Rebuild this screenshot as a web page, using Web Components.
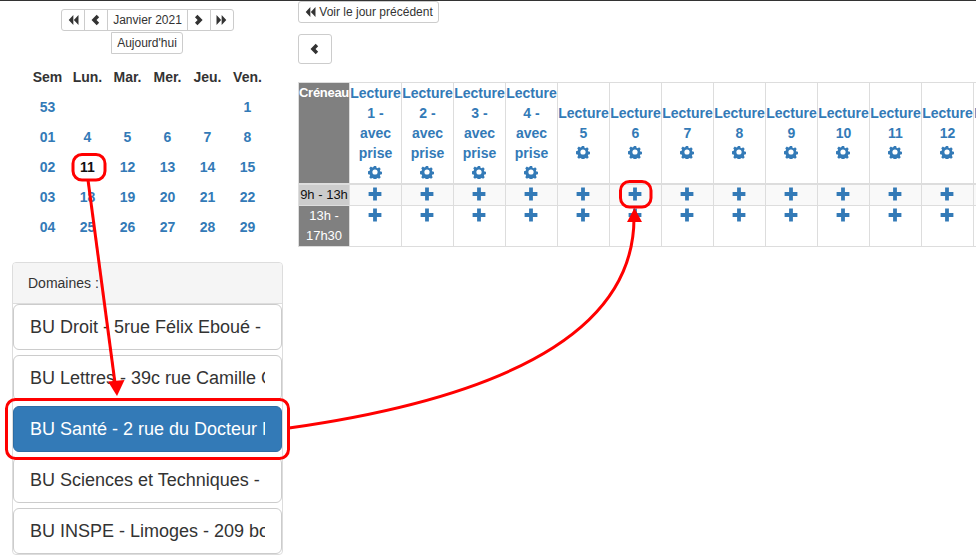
<!DOCTYPE html>
<html lang="fr">
<head>
<meta charset="utf-8">
<title>Réservation</title>
<style>
  html, body { margin: 0; height: 556px; overflow: hidden; background: #fff; }
  body { font: 14px/20px "Liberation Sans", Arial, sans-serif; color: #333; }
</style>
</head>
<body>
<resa-page></resa-page>
<script>
// Inline glyphs standing in for the glyphicons font
const ICONS = {
  backward: '<path d="M7.4 1.2v11.6L2 7zM13.4 1.2v11.6L8 7z"/>',
  forward: '<path d="M.6 1.2v11.6L6 7zM6.6 1.2v11.6L12 7z"/>',
  left: '<path d="M7.8 1l2.9 2.9L7.6 7l3.1 3.1L7.8 13l-6-6z"/>',
  right: '<path d="M5.2 1L2.3 3.9 5.4 7l-3.1 3.1L5.2 13l6-6z"/>',
  plus: '<path d="M5.1.6h3.8v4.5h4.5v3.8H8.9v4.5H5.1V8.9H.6V5.1h4.5z"/>',
  cog: '<path fill-rule="evenodd" d="M5.7.4h2.6l.4 1.8 1.3.55 1.6-1 1.8 1.8-1 1.6.55 1.3 1.8.4v2.6l-1.8.4-.55 1.3 1 1.6-1.8 1.8-1.6-1-1.3.55-.4 1.8H5.7l-.4-1.8-1.3-.55-1.6 1-1.8-1.8 1-1.6-.55-1.3-1.8-.4V6.1l1.8-.4.55-1.3-1-1.6 1.8-1.8 1.6 1 1.3-.55zM7 4.1A2.9 2.9 0 1 0 7 9.9 2.9 2.9 0 1 0 7 4.1z" transform="translate(.7 .7) scale(.9)"/>'
};

class UiIcon extends HTMLElement {
  constructor() {
    super();
    const shadowRoot = this.attachShadow({ mode: "open" });
    const name = this.getAttribute("name");
    shadowRoot.innerHTML = `
      <style>
        :host { display: inline-block; width: 14px; height: 14px; vertical-align: -2px; }
        svg { display: block; width: 100%; height: 100%; fill: currentColor; }
      </style>
      <svg viewBox="0 0 14 14" aria-hidden="true">${ICONS[name]}</svg>`;
  }
}

// Bootstrap 3 like button, size comes from the "size" attribute
class BsButton extends HTMLElement {
  constructor() {
    super();
    const shadowRoot = this.attachShadow({ mode: "open" });
    shadowRoot.innerHTML = `
      <style>
        :host {
          display: inline-block; box-sizing: border-box; white-space: nowrap;
          background: #fff; border: 1px solid #ccc; color: #333; text-align: center;
          font-size: 12px; line-height: 18px; padding: 1px 5px; border-radius: 3px;
        }
        :host([size="sm"]) { padding: 5px 10px; }
        :host([size="lg"]) {
          display: block; text-align: left; font-size: 18px; line-height: 24px;
          padding: 10px 16px; border-radius: 6px;
        }
        :host([active]) { background: #337ab7; border-color: #2e6da4; color: #fff; }
        .clip { display: block; }
        :host([size="lg"]) .clip { overflow: hidden; }
        ::slotted(ui-icon) { width: 12px; height: 12px; vertical-align: -2px; }
      </style>
      <span class="clip"><slot></slot></span>`;
  }
}

class MonthNav extends HTMLElement {
  constructor() {
    super();
    const shadowRoot = this.attachShadow({ mode: "open" });
    shadowRoot.innerHTML = `
      <style>
        :host { display: flex; flex-direction: column; align-items: center; gap: 1px; }
        .group { display: flex; }
        bs-button { border-radius: 0; margin-left: -1px; }
        bs-button:first-child { border-radius: 3px 0 0 3px; margin-left: 0; }
        bs-button:last-child { border-radius: 0 3px 3px 0; }
      </style>
      <div class="group">
        <bs-button><ui-icon name="backward"></ui-icon></bs-button>
        <bs-button><ui-icon name="left"></ui-icon></bs-button>
        <bs-button>Janvier 2021</bs-button>
        <bs-button><ui-icon name="right"></ui-icon></bs-button>
        <bs-button><ui-icon name="forward"></ui-icon></bs-button>
      </div>
      <bs-button>Aujourd'hui</bs-button>`;
  }
}

class MiniCalendar extends HTMLElement {
  constructor() {
    super();
    const shadowRoot = this.attachShadow({ mode: "open" });
    const weeks = [
      ["53", "", "", "", "", "1"],
      ["01", "4", "5", "6", "7", "8"],
      ["02", "11", "12", "13", "14", "15"],
      ["03", "18", "19", "20", "21", "22"],
      ["04", "25", "26", "27", "28", "29"]
    ];
    const rows = weeks.map((week) => `<tr>${week.map((day) =>
      `<td class="${day === "11" ? "today" : ""}">${day}</td>`).join("")}</tr>`).join("");
    shadowRoot.innerHTML = `
      <style>
        :host { display: block; margin-top: 8px; }
        table { border-collapse: collapse; table-layout: fixed; width: 240px; margin: 0 auto; }
        th, td { width: 40px; height: 30px; padding: 0; text-align: center; font-weight: bold; }
        td { color: #337ab7; }
        td.today { color: #111; }
      </style>
      <table>
        <thead><tr><th>Sem</th><th>Lun.</th><th>Mar.</th><th>Mer.</th><th>Jeu.</th><th>Ven.</th></tr></thead>
        <tbody>${rows}</tbody>
      </table>`;
  }
}

class DomainPanel extends HTMLElement {
  constructor() {
    super();
    const shadowRoot = this.attachShadow({ mode: "open" });
    shadowRoot.innerHTML = `
      <style>
        :host {
          display: block; margin: 20px 12px 0; border: 1px solid #ddd;
          border-radius: 4px; background: #fff;
        }
        .heading {
          padding: 10px 15px; background: #f5f5f5; border-bottom: 1px solid #ddd;
          border-radius: 3px 3px 0 0;
        }
        .list { display: flex; flex-direction: column; gap: 5px; }
      </style>
      <div class="heading">Domaines :</div>
      <div class="list"><slot></slot></div>`;
  }
}

class SlotTable extends HTMLElement {
  constructor() {
    super();
    const shadowRoot = this.attachShadow({ mode: "open" });
    const titles = [
      "1 -<br>avec<br>prise", "2 -<br>avec<br>prise", "3 -<br>avec<br>prise", "4 -<br>avec<br>prise",
      "5", "6", "7", "8", "9", "10", "11", "12", "13"
    ];
    const heads = titles.map((t) =>
      `<th>Lecture<br>${t}<br><ui-icon name="cog"></ui-icon></th>`).join("");
    const plus = titles.map(() => `<td><ui-icon name="plus"></ui-icon></td>`).join("");
    shadowRoot.innerHTML = `
      <style>
        :host { display: block; width: 728px; }
        table { border-collapse: collapse; table-layout: fixed; width: 728px; }
        col.label { width: 51px; }
        th, td {
          padding: 0; border: 1px solid #ddd; text-align: center; color: #337ab7;
        }
        th { font-weight: bold; vertical-align: middle; height: 100px; border-bottom-width: 2px; white-space: nowrap; }
        th ui-icon { vertical-align: -1px; margin-right: 1px; }
        td { vertical-align: top; }
        th.label { background: #808080; color: #fff; vertical-align: top; font-size: 13px; letter-spacing: -.3px; }
        td.label { background: #808080; color: #fff; height: 40px; font-size: 13px; }
        tr.odd td { background: #f9f9f9; height: 20px; }
        tr.odd td.label { background: #ccc; color: #111; white-space: nowrap; }
        td ui-icon { vertical-align: top; margin: 2px 1px 0 0; }
      </style>
      <table>
        <colgroup><col class="label"></colgroup>
        <thead><tr><th class="label">Créneau</th>${heads}</tr></thead>
        <tbody>
          <tr class="odd"><td class="label">9h - 13h</td>${plus}</tr>
          <tr><td class="label">13h - 17h30</td>${plus}</tr>
        </tbody>
      </table>`;
  }
}

// Red markers drawn on top of the screenshot, free canvas
class RedMarkers extends HTMLElement {
  constructor() {
    super();
    const shadowRoot = this.attachShadow({ mode: "open" });
    shadowRoot.innerHTML = `
      <style>
        :host { position: absolute; left: 0; top: 0; width: 976px; height: 556px; pointer-events: none; }
        svg { display: block; }
        .line { fill: none; stroke: #f00; stroke-width: 3; }
      </style>
      <svg width="976" height="556" viewBox="0 0 976 556">
        <rect class="line" x="73" y="154.5" width="32" height="25.5" rx="9"/>
        <rect class="line" x="6.5" y="399.5" width="282" height="59" rx="9"/>
        <rect class="line" x="620.5" y="181.5" width="30.5" height="25.5" rx="9"/>
        <path class="line" d="M88 180L115 383"/>
        <path d="M117 396L108 381.5 124.5 380z" fill="#f00"/>
        <path class="line" d="M289 428C430 408 634 360 634 218"/>
        <path d="M634.5 208L627 222H642z" fill="#f00"/>
      </svg>`;
  }
}

class ResaPage extends HTMLElement {
  constructor() {
    super();
    const shadowRoot = this.attachShadow({ mode: "open" });
    shadowRoot.innerHTML = `
      <style>
        :host { display: flex; position: relative; width: 976px; height: 556px; overflow: hidden; box-sizing: border-box; border-top: 1px solid #333; }
        .left { flex: 0 0 295px; width: 295px; min-width: 0; padding-top: 8px; box-sizing: border-box; }
        .right { flex: 1; min-width: 0; padding-left: 3px; display: flex; flex-direction: column; align-items: flex-start; gap: 11px; }
        slot-table { margin-top: 7px; flex: none; }
        red-markers { top: -1px; }
      </style>
      <div class="left">
        <month-nav></month-nav>
        <mini-calendar></mini-calendar>
        <domain-panel>
          <bs-button size="lg">BU Droit - 5rue Félix Eboué - Limoges</bs-button>
          <bs-button size="lg">BU Lettres - 39c rue Camille Guérin - Limoges</bs-button>
          <bs-button size="lg" active>BU Santé - 2 rue du Docteur Marcland - Limoges</bs-button>
          <bs-button size="lg">BU Sciences et Techniques - 123 avenue Albert Thomas</bs-button>
          <bs-button size="lg">BU INSPE - Limoges - 209 boulevard de Vanteaux</bs-button>
        </domain-panel>
      </div>
      <div class="right">
        <bs-button><ui-icon name="backward"></ui-icon> Voir le jour précédent</bs-button>
        <bs-button size="sm"><ui-icon name="left"></ui-icon></bs-button>
        <slot-table></slot-table>
      </div>
      <red-markers></red-markers>`;
  }
}

customElements.define("ui-icon", UiIcon);
customElements.define("bs-button", BsButton);
customElements.define("month-nav", MonthNav);
customElements.define("mini-calendar", MiniCalendar);
customElements.define("domain-panel", DomainPanel);
customElements.define("slot-table", SlotTable);
customElements.define("red-markers", RedMarkers);
customElements.define("resa-page", ResaPage);
</script>
</body>
</html>
